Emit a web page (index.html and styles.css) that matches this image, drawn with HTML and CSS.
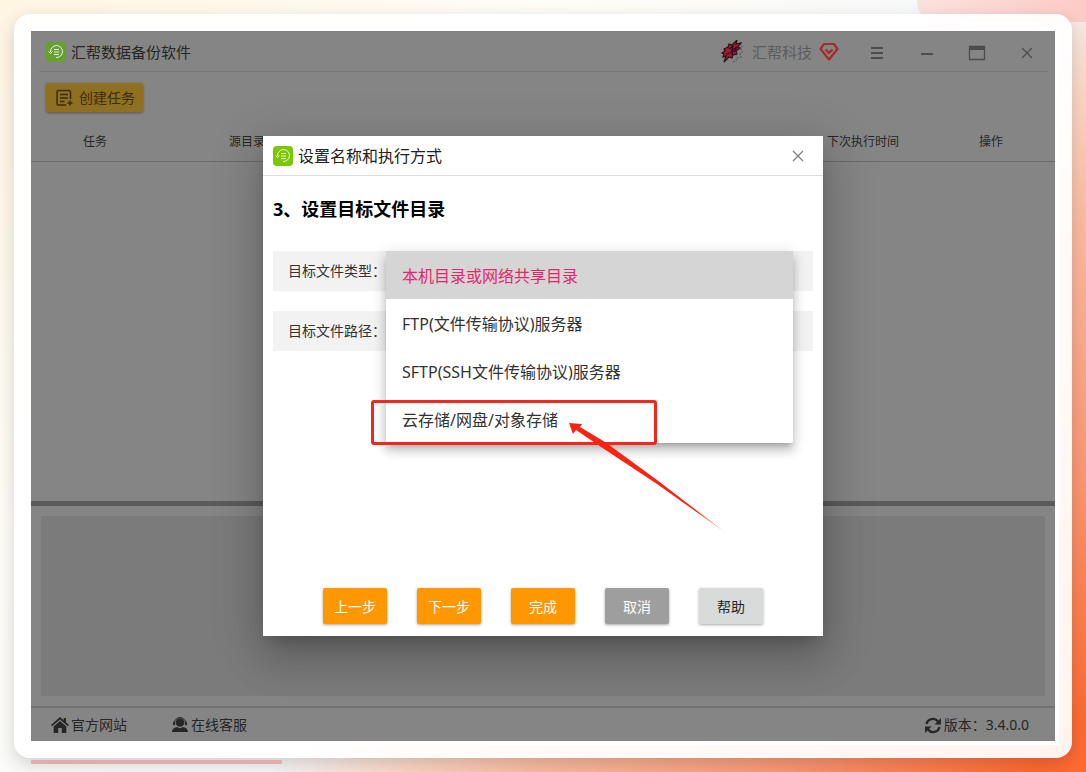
FILE: index.html
```html
<!DOCTYPE html>
<html lang="zh-CN">
<head>
    <meta charset="UTF-8">
    <title>汇帮数据备份软件</title>
    <link rel="stylesheet" href="styles.css">
</head>
<body>
    <!-- Shared logo -->
    <svg class="defs" width="0" height="0" aria-hidden="true">
        <symbol id="logo" viewBox="0 0 20 20">
            <rect width="20" height="20" rx="4" fill="currentColor"/>
            <g fill="none" stroke="#fff" stroke-opacity=".85">
                <path d="M4.500 10A6 6 0 1 1 10 15.500"/>
                <path d="M2.500 9.500l2 2 2-2"/>
                <path d="M8 7.500h5M8 10h5M8 12.500h5"/>
            </g>
        </symbol>
    </svg>

    <main class="frame">
        <div class="app">
            <header class="titlebar">
                <svg class="logo"><use href="#logo"/></svg>
                <span class="app-name">汇帮数据备份软件</span>
                <a class="account" href="#">
                    <svg class="avatar" viewBox="0 0 22 24">
                        <path d="M19 3l2 4-1 2 1 3-2 2 1 3-4 1-1 3-4 1" fill="none" stroke="#5d6763" stroke-width="1.500" stroke-dasharray="2 1"/>
                        <path d="M1 13l3-2-1-2 4-2 1-3 3 1 5-5-1 4 5-1-3 4 2 1-4 3 1 3-4 1-1 3-3-1-5 5 2-6-3 1 1-3z" fill="#a8192f" stroke="#26151b" stroke-width="1.200"/>
                        <path d="M8 9l4-3-1 4 5-3-3 5M5 14l4-1 3-2-1 4" fill="none" stroke="#26151b" stroke-width="1.200"/>
                    </svg>
                    <span>汇帮科技</span>
                    <svg class="vip" viewBox="0 0 20 20">
                        <path d="M5 2h10l3.500 5L10 17.500 1.500 7z" fill="none" stroke="#a52a2a" stroke-width="2.200" stroke-linejoin="round"/>
                        <path d="M6.500 7.500L10 11l3.500-3.500" fill="none" stroke="#a52a2a" stroke-width="2.200"/>
                    </svg>
                </a>
                <div class="window-buttons">
                    <button type="button" aria-label="菜单"><svg viewBox="0 0 18 18"><path d="M3 5h12M3 10h12M3 15h12" stroke-width="2"/></svg></button>
                    <button type="button" aria-label="最小化"><svg viewBox="0 0 18 18"><path d="M3 11h12" stroke-width="2"/></svg></button>
                    <button type="button" aria-label="最大化"><svg viewBox="0 0 18 18"><path d="M1.500 3.500h15v13h-15z"/><path d="M1 5h16" stroke-width="4"/></svg></button>
                    <button type="button" aria-label="关闭"><svg viewBox="0 0 18 18"><path d="M4 5l10 10M14 5L4 15"/></svg></button>
                </div>
            </header>

            <div class="toolbar">
                <button class="create" type="button">
                    <svg viewBox="0 0 18 18" fill="none" stroke="currentColor" stroke-width="1.500">
                        <path d="M15.500 10V3a1.500 1.500 0 0 0-1.500-1.500H3.500A1.500 1.500 0 0 0 2 3v11.500A1.500 1.500 0 0 0 3.500 16H11M5 5.500h8M5 9h8M5 12.500h4.500M15 11.500v5M12.500 14h5"/>
                    </svg>
                    创建任务
                </button>
            </div>

            <div class="task-list">
                <table>
                    <colgroup>
                        <col class="col-side">
                        <col class="col-source">
                        <col>
                        <col class="col-side">
                        <col class="col-side">
                    </colgroup>
                    <thead>
                        <tr>
                            <th>任务</th>
                            <th>源目录</th>
                            <th></th>
                            <th>下次执行时间</th>
                            <th>操作</th>
                        </tr>
                    </thead>
                </table>
            </div>

            <div class="log-panel">
                <div class="log"></div>
            </div>

            <footer class="statusbar">
                <a class="site" href="#">
                    <svg viewBox="0 0 18 18"><path d="M9 1L0 9l1.200 1.300L9 3.500l7.800 6.800L18 9l-3-2.700V2h-2.300v2.300z"/><path d="M9 5l-6.300 5.500V17h4.500v-5h3.600v5h4.500v-6.500z"/></svg>
                    官方网站
                </a>
                <a class="service" href="#">
                    <svg viewBox="0 0 18 18"><circle cx="9" cy="6.500" r="4.300"/><path d="M3.500 7a5.500 5.500 0 0 1 11 0" fill="none" stroke="currentColor"/><rect x="2" y="5.500" width="2" height="4" rx="1"/><rect x="14" y="5.500" width="2" height="4" rx="1"/><path d="M1 16c0-3 2.500-4.500 5-5 2 1.500 4 1.500 6 0 2.500.500 5 2 5 5z"/></svg>
                    在线客服
                </a>
                <span class="version">
                    <svg viewBox="0 0 18 18"><path d="M2.500 8A6.500 6.500 0 0 1 14 5.500M15.500 11A6.500 6.500 0 0 1 4 13.500" fill="none" stroke="currentColor" stroke-width="2.400"/><path d="M17 2v6.500h-6.500zM1 17v-6.500h6.500z"/></svg>
                    版本：3.4.0.0
                </span>
            </footer>

            <div class="overlay">
                <section class="dialog" role="dialog" aria-labelledby="dialogTitle">
                    <header class="dialog-header">
                        <svg class="logo"><use href="#logo"/></svg>
                        <span id="dialogTitle">设置名称和执行方式</span>
                        <button type="button" aria-label="关闭"><svg viewBox="0 0 18 18"><path d="M4 4l10 10M14 4L4 14"/></svg></button>
                    </header>
                    <form class="dialog-body">
                        <h2>3、设置目标文件目录</h2>
                        <div class="field">
                            <span id="typeLabel">目标文件类型：</span>
                            <div class="select">
                                <div class="menu" role="listbox" aria-labelledby="typeLabel">
                                    <button type="button" class="selected" role="option" aria-selected="true">本机目录或网络共享目录</button>
                                    <button type="button" role="option">FTP(文件传输协议)服务器</button>
                                    <button type="button" role="option">SFTP(SSH文件传输协议)服务器</button>
                                    <button type="button" role="option">云存储/网盘/对象存储</button>
                                    <!-- Pointer to the cloud storage option -->
                                    <div class="mark"></div>
                                    <svg class="arrow" viewBox="0 0 160 112">
                                        <defs>
                                            <linearGradient id="tail" x1="0" y1="0" x2="1" y2="1">
                                                <stop offset=".8" stop-color="#fb2313"/>
                                                <stop offset="1" stop-color="#fb2313" stop-opacity=".3"/>
                                            </linearGradient>
                                        </defs>
                                        <path d="M0 0L13 1 11 4 36 19 88 57 157 110 88 61 32 24 7 7 4 11z" fill="url(#tail)"/>
                                    </svg>
                                </div>
                            </div>
                        </div>
                        <div class="field">
                            <label for="targetPath">目标文件路径：</label>
                            <input id="targetPath" type="text">
                        </div>
                        <div class="actions">
                            <button type="button">上一步</button>
                            <button type="button">下一步</button>
                            <button type="button">完成</button>
                            <button type="button" class="cancel">取消</button>
                            <button type="button" class="help">帮助</button>
                        </div>
                    </form>
                </section>
            </div>
        </div>
    </main>
    <div class="progress"></div>
</body>
</html>
```
FILE: styles.css
```css
* {
    box-sizing: border-box;
}
body {
    margin: 0;
    min-height: 100vh;
    padding: 14px 14px 8px;
    display: flex;
    flex-direction: column;
    position: relative;
    overflow: hidden;
    font-family: "Noto Sans", "Noto Sans CJK SC", sans-serif;
    font-size: 14px;
    line-height: 20px;
    color: #262626;
    background: linear-gradient(135deg, #fff5e3 0%, #fffdf7 30%, #f6f8fa 56%, #fcdccd 62%, #fbbca2 70%, #fb9773 84%, #ff6a33 97%);
}
/* Soft shape in the top right corner */
body::before {
    content: "";
    position: absolute;
    top: 0;
    right: 0;
    width: 169px;
    height: 22px;
    border-radius: 0 0 0 20px;
    background: linear-gradient(90deg, #fbe2df, #fdcbc5);
}
button {
    border: 0;
    padding: 0;
    font: inherit;
    color: inherit;
    background: none;
    cursor: pointer;
}
a {
    color: inherit;
    text-decoration: none;
}
svg {
    display: block;
    flex: none;
}
.defs {
    position: absolute;
}
.frame {
    flex: 1;
    display: flex;
    position: relative;
    padding: 17px;
    border-radius: 16px;
    background: rgba(255, 255, 255, 0.93);
    box-shadow: 0 6px 18px rgba(0, 0, 0, 0.17);
}
.progress {
    width: 251px;
    height: 4px;
    margin: 2px 0 0 17px;
    position: relative;
    border-radius: 1px;
    background: #e4abae;
}
.app {
    flex: 1;
    display: flex;
    flex-direction: column;
    position: relative;
    background: #858585;
    box-shadow: 0 0 0 4px #fff;
}
.logo {
    width: 20px;
    height: 20px;
    color: #66a02e;
}

/* Title bar */
.titlebar {
    height: 41px;
    margin: 0 7px 0 8px;
    padding: 1px 0 0 7px;
    display: flex;
    align-items: center;
    border-bottom: 1px solid #767676;
}
.app-name {
    margin-left: 5px;
    font-size: 15px;
}
.account {
    margin: 0 17px 0 auto;
    display: flex;
    align-items: center;
    font-size: 15px;
    color: #5c5c5c;
}
.avatar {
    width: 22px;
    height: 24px;
    margin-right: 9px;
}
.vip {
    width: 20px;
    height: 20px;
    margin-left: 7px;
}
.window-buttons {
    display: flex;
    gap: 8px;
}
.window-buttons button {
    width: 42px;
    height: 38px;
    display: grid;
    place-items: center;
}
.window-buttons svg,
.dialog-header button svg {
    width: 18px;
    height: 18px;
    fill: none;
    stroke: #4c4c4c;
    stroke-width: 1.3;
}

/* Tasks */
.toolbar {
    padding: 11px 15px 9px;
}
.create {
    height: 29px;
    padding: 0 8px 0 9px;
    display: flex;
    align-items: center;
    gap: 6px;
    border-radius: 2px;
    color: #3a2e10;
    background: #8f6f20;
    box-shadow: 0 1px 3px rgba(0, 0, 0, 0.35);
}
.create svg {
    width: 18px;
    height: 18px;
}
.task-list {
    flex: 1;
}
table {
    width: 100%;
    table-layout: fixed;
    border-collapse: collapse;
}
.col-side {
    width: 128px;
}
.col-source {
    width: 176px;
}
th {
    height: 40px;
    padding: 2px 0 0;
    border-bottom: 1px solid #6a6a6a;
    font-size: 12px;
    font-weight: normal;
}
.log-panel {
    height: 206px;
    padding: 10px;
    display: flex;
    border-top: 5px solid #5b5b5b;
    border-bottom: 1px solid #727272;
}
.log {
    flex: 1;
    background: #7b7b7b;
}

/* Status bar */
.statusbar {
    height: 34px;
    padding: 0 26px 0 20px;
    display: flex;
    align-items: center;
    gap: 44px;
    border-top: 1px solid #727272;
}
.statusbar a,
.version {
    display: flex;
    align-items: center;
    gap: 2px;
}
.statusbar .version {
    margin-left: auto;
}
.statusbar svg {
    width: 18px;
    height: 18px;
    fill: currentColor;
}

/* Dialog */
.overlay {
    position: absolute;
    inset: 0;
    display: grid;
    place-items: center;
    overflow: hidden;
}
.dialog {
    width: 560px;
    min-height: 500px;
    display: flex;
    flex-direction: column;
    background: #fff;
    box-shadow: 0 11px 15px -7px rgba(0, 0, 0, 0.2), 0 24px 38px 3px rgba(0, 0, 0, 0.14), 0 9px 46px 8px rgba(0, 0, 0, 0.12);
}
.dialog-header {
    height: 40px;
    padding: 0 10px;
    display: flex;
    align-items: center;
    gap: 5px;
    border-bottom: 1px solid #dedede;
    font-size: 16px;
    color: #222;
}
.dialog-header .logo {
    color: #7ac800;
}
.dialog-header button {
    width: 30px;
    height: 30px;
    margin-left: auto;
    display: grid;
    place-items: center;
}
.dialog-header button svg {
    stroke: #808080;
}
.dialog-body {
    flex: 1;
    padding: 20px 10px 12px;
    display: flex;
    flex-direction: column;
    gap: 20px;
}
h2 {
    margin: 0 0 9px;
    font-size: 18px;
    line-height: 26px;
    color: #000;
}
.field {
    height: 40px;
    padding: 0 20px 0 15px;
    display: flex;
    align-items: center;
    color: #333;
    background: #f2f2f2;
}
.field input,
.select {
    flex: 1;
    height: 40px;
}
.field input {
    border: 0;
    font: inherit;
    background: transparent;
}
.select {
    position: relative;
}
.menu {
    position: absolute;
    top: 0;
    left: 0;
    right: 0;
    z-index: 1;
    display: flex;
    flex-direction: column;
    border-radius: 2px;
    background: #fff;
    box-shadow: 0 5px 5px -3px rgba(0, 0, 0, 0.2), 0 8px 10px 1px rgba(0, 0, 0, 0.14), 0 3px 14px 2px rgba(0, 0, 0, 0.12);
}
.menu button {
    height: 48px;
    padding: 2px 16px 0;
    font-size: 16px;
    text-align: left;
}
.menu .selected {
    color: #e2286c;
    background: #d5d5d5;
}
.mark {
    position: absolute;
    left: -15px;
    bottom: -2px;
    width: 286px;
    height: 45px;
    border: 3px solid #f3271b;
    border-radius: 3px;
}
.arrow {
    position: absolute;
    left: 183px;
    top: 172px;
    width: 160px;
    height: 112px;
}
.actions {
    margin-top: auto;
    display: flex;
    justify-content: center;
    gap: 30px;
}
.actions button {
    width: 64px;
    height: 36px;
    padding-top: 2px;
    border-radius: 2px;
    color: #fff;
    background: #ff9800;
    box-shadow: 0 1px 3px rgba(0, 0, 0, 0.35);
}
.actions .cancel {
    background: #9e9e9e;
}
.actions .help {
    color: #262626;
    background: #d9dbda;
}
```
